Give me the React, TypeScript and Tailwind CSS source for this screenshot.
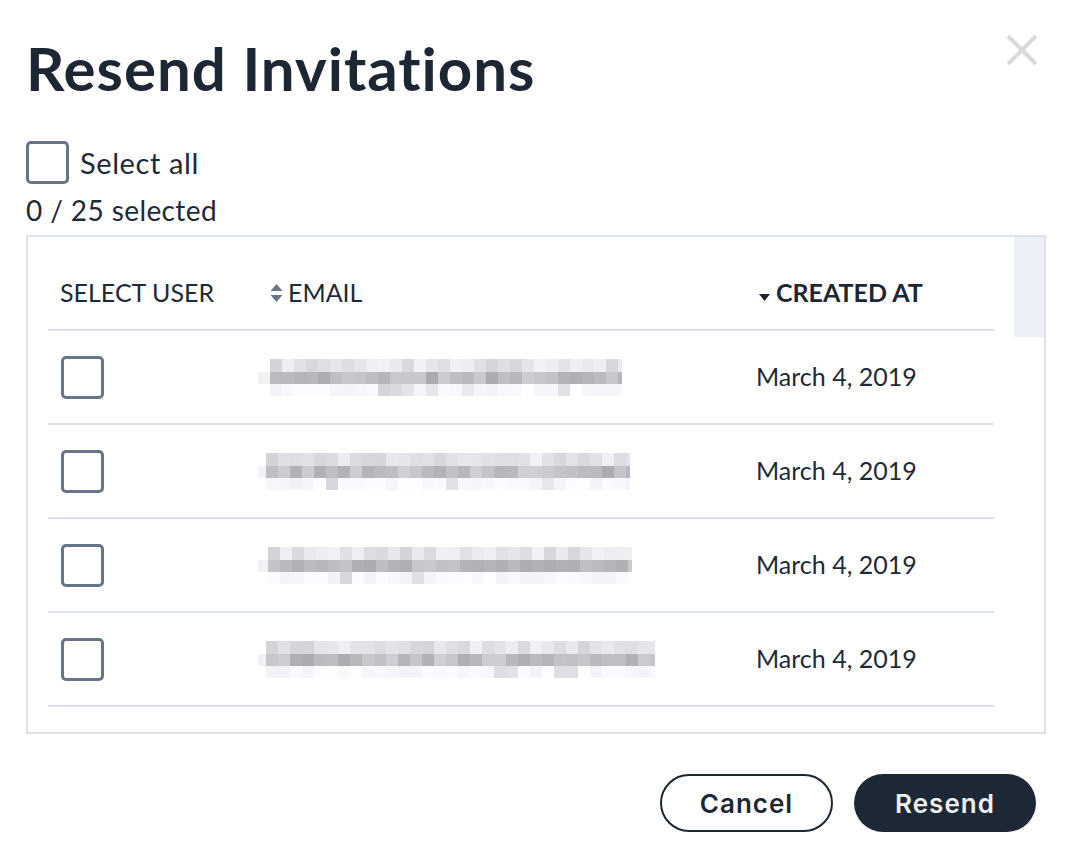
import React from "react";

const rows = [
  { seed: 11, start: 266, end: 618, lead: 12 },
  { seed: 27, start: 266, end: 630, lead: 8 },
  { seed: 43, start: 266, end: 630, lead: 10 },
  { seed: 59, start: 266, end: 655, lead: 8 },
];

function rand(seed: number) {
  let s = seed;
  return () => {
    s = (s * 16807) % 2147483647;
    return (s - 1) / 2147483646;
  };
}

function grey(v: number) {
  const c = Math.round(v);
  return `rgb(${c},${c + 2},${c + 6})`;
}

// pixelated (blurred out) email address
function Mosaic({ seed, start, end, lead }: { seed: number; start: number; end: number; lead: number }) {
  const r = rand(seed);
  const width = end - start + lead;
  const n = Math.ceil((end - start) / 12);
  const cells: React.ReactNode[] = [];
  for (let i = 0; i < n; i++) {
    const x = lead + i * 12;
    const top = 210 + r() * 30;
    const mid = 168 + r() * 38;
    const low = r() > 0.88 ? 210 + r() * 22 : 240 + r() * 12;
    cells.push(<rect key={`t${i}`} x={x} y={0} width={12} height={13} fill={grey(top)} />);
    cells.push(<rect key={`m${i}`} x={x} y={13} width={12} height={12} fill={grey(mid)} />);
    cells.push(<rect key={`b${i}`} x={x} y={25} width={12} height={12} fill={grey(low)} />);
  }
  return (
    <svg width={width} height={37} className="block">
      <rect x={0} y={13} width={lead} height={12} fill="#f1f2f4" />
      {cells}
    </svg>
  );
}

function Checkbox() {
  return <span className="block h-[43px] w-[43px] shrink-0 rounded-[5px] border-[3px] border-[#67758a] bg-white" />;
}

export default function App() {
  return (
    <div className="relative h-[862px] w-[1078px] overflow-hidden bg-white font-['Lato',sans-serif] text-[#1f2a37]">
      <button className="absolute right-[40px] top-[34px] text-[#d8d9dc]" aria-label="Close">
        <svg width="32" height="32" viewBox="0 0 32 32" fill="none" stroke="currentColor" strokeWidth="4">
          <path d="M2 2 L30 30 M30 2 L2 30" />
        </svg>
      </button>

      <div className="px-[26px] pt-[30px]">
        <h1 className="text-[60px] font-bold leading-[76px] tracking-[1px] text-[#1c2733]">Resend Invitations</h1>

        <label className="mt-[35px] flex items-center gap-[11px]">
          <Checkbox />
          <span className="text-[29px] leading-[34px] tracking-[0.6px]">Select all</span>
        </label>
        <p className="mt-[10px] text-[28px] leading-[32px] tracking-[0.4px]">0 / 25 selected</p>

        <div className="mt-[9px] flex h-[499px] w-[1020px] border-2 border-[#dde1ee] pl-[20px]">
          <div className="w-[946px]">
            <div className="grid h-[94px] grid-cols-[210px_498px_1fr] items-center border-b-2 border-[#dde1ee] pt-[19px] text-[25px]">
              <span className="pl-[12px]">SELECT USER</span>
              <span className="flex items-center gap-[5px] pl-[12px]">
                <svg width="13" height="20" viewBox="0 0 13 20" fill="#6b7689">
                  <path d="M6.5 1 L12.5 8 H0.5 Z" />
                  <path d="M6.5 19 L12.5 12 H0.5 Z" />
                </svg>
                EMAIL
              </span>
              <span className="flex items-center gap-[6px] pl-[3px] font-bold text-[#1c2733]">
                <svg width="11" height="7" viewBox="0 0 11 7" fill="#1c2733" className="mt-[10px]">
                  <path d="M0 0 H11 L5.5 7 Z" />
                </svg>
                CREATED AT
              </span>
            </div>
            {rows.map((row) => (
              <div key={row.seed} className="grid h-[94px] grid-cols-[210px_498px_1fr] items-center border-b-2 border-[#dde1ee]">
                <span className="pl-[13px]">
                  <Checkbox />
                </span>
                <span>
                  <Mosaic {...row} />
                </span>
                <span className="text-[25px]">March 4, 2019</span>
              </div>
            ))}
          </div>
          <div className="ml-auto h-[100px] w-[30px] bg-[#eceff5]" />
        </div>

        <div className="mt-[40px] flex justify-end gap-[21px] pr-[16px] font-['Inter',sans-serif] text-[26px] font-semibold">
          <button className="h-[58px] w-[173px] rounded-full border-2 border-[#1c2733] tracking-[1px] text-[#1c2733]">Cancel</button>
          <button className="h-[58px] w-[182px] rounded-full bg-[#1c2835] tracking-[1px] text-[#eef0f2]">Resend</button>
        </div>
      </div>
    </div>
  );
}
